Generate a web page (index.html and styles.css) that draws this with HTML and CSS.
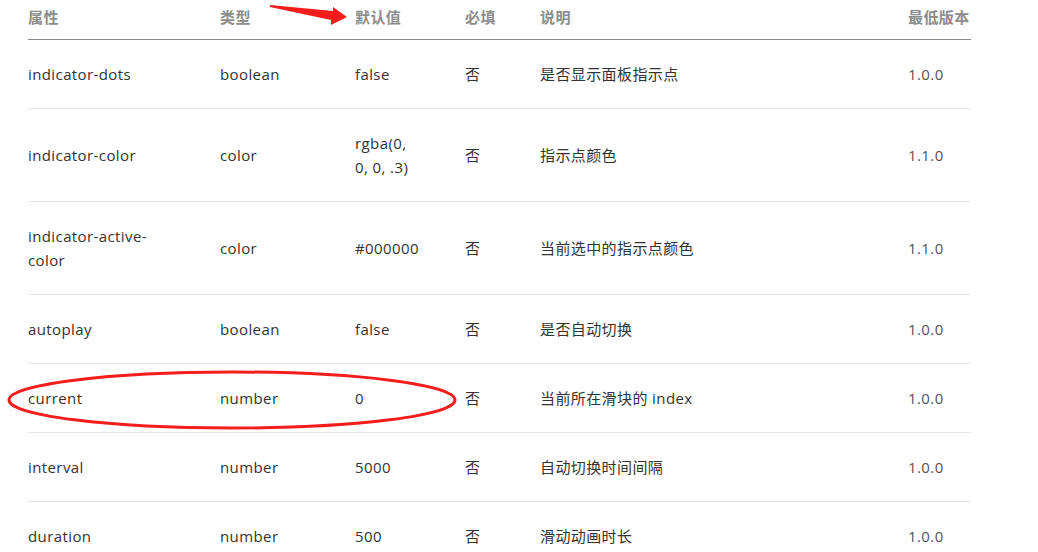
FILE: index.html
```html
<!DOCTYPE html>
<html lang="zh-CN">
<head>
    <meta charset="UTF-8">
    <meta name="viewport" content="width=device-width, initial-scale=1.0">
    <title>swiper 属性</title>
    <link rel="stylesheet" href="styles.css">
</head>
<body>
<div class="page">
    <table class="props">
        <colgroup>
            <col class="w-name">
            <col class="w-type">
            <col class="w-default">
            <col class="w-required">
            <col class="w-desc">
            <col class="w-version">
        </colgroup>
        <thead>
            <tr>
                <th class="c-name">属性</th>
                <th>类型</th>
                <th class="c-default">默认值</th>
                <th>必填</th>
                <th>说明</th>
                <th class="c-version">最低版本</th>
            </tr>
        </thead>
        <tbody>
            <tr>
                <td class="c-name">indicator-dots</td>
                <td>boolean</td>
                <td class="c-default">false</td>
                <td>否</td>
                <td>是否显示面板指示点</td>
                <td class="c-version">1.0.0</td>
            </tr>
            <tr>
                <td class="c-name">indicator-color</td>
                <td>color</td>
                <td class="c-default">rgba(0, 0, 0, .3)</td>
                <td>否</td>
                <td>指示点颜色</td>
                <td class="c-version">1.1.0</td>
            </tr>
            <tr>
                <td class="c-name">indicator-active-color</td>
                <td>color</td>
                <td class="c-default">#000000</td>
                <td>否</td>
                <td>当前选中的指示点颜色</td>
                <td class="c-version">1.1.0</td>
            </tr>
            <tr>
                <td class="c-name">autoplay</td>
                <td>boolean</td>
                <td class="c-default">false</td>
                <td>否</td>
                <td>是否自动切换</td>
                <td class="c-version">1.0.0</td>
            </tr>
            <tr>
                <td class="c-name">current</td>
                <td>number</td>
                <td class="c-default">0</td>
                <td>否</td>
                <td>当前所在滑块的 index</td>
                <td class="c-version">1.0.0</td>
            </tr>
            <tr>
                <td class="c-name">interval</td>
                <td>number</td>
                <td class="c-default">5000</td>
                <td>否</td>
                <td>自动切换时间间隔</td>
                <td class="c-version">1.0.0</td>
            </tr>
            <tr>
                <td class="c-name">duration</td>
                <td>number</td>
                <td class="c-default">500</td>
                <td>否</td>
                <td>滑动动画时长</td>
                <td class="c-version">1.0.0</td>
            </tr>
        </tbody>
    </table>

    <!-- red marks drawn over the screenshot -->
    <svg class="marks" width="1038" height="552" viewBox="0 0 1038 552">
        <polygon points="270,5 333,11 333,7 347,17 331,25 331,20 270,7" fill="#f51c1c"/>
        <ellipse cx="232" cy="400" rx="223" ry="28" fill="none" stroke="#f51c1c" stroke-width="3"/>
    </svg>
</div>
</body>
</html>
```

FILE: styles.css
```css
body {
    margin: 0;
    background: #fff;
    font-family: "Open Sans", "Noto Sans CJK SC", sans-serif;
    font-size: 15px;
    letter-spacing: 0.4px;
    color: #333;
}

.page {
    position: relative;
    padding-left: 28px;
    height: 552px;
    overflow: hidden;
}

.props {
    width: 943px;
    table-layout: fixed;
    border-collapse: collapse;
}

.w-name { width: 192px; }
.w-type { width: 135px; }
.w-default { width: 110px; }
.w-required { width: 75px; }
.w-desc { width: 368px; }
.w-version { width: 63px; }

th,
td {
    text-align: left;
    line-height: 24px;
    padding: 22px 20px 22px 0;
    vertical-align: middle;
}

th {
    padding-top: 5px;
    padding-bottom: 10px;
    color: #8c8c8c;
    font-weight: bold;
    border-bottom: 1px solid #8a8a8a;
}

td {
    border-bottom: 1px solid #e4e4e4;
}

.c-name {
    padding-right: 50px;
}

.c-default {
    padding-right: 44px;
}

.c-version {
    padding-right: 0;
}

td.c-version {
    color: #555;
}

.marks {
    position: absolute;
    left: 0;
    top: 0;
    pointer-events: none;
}
```
